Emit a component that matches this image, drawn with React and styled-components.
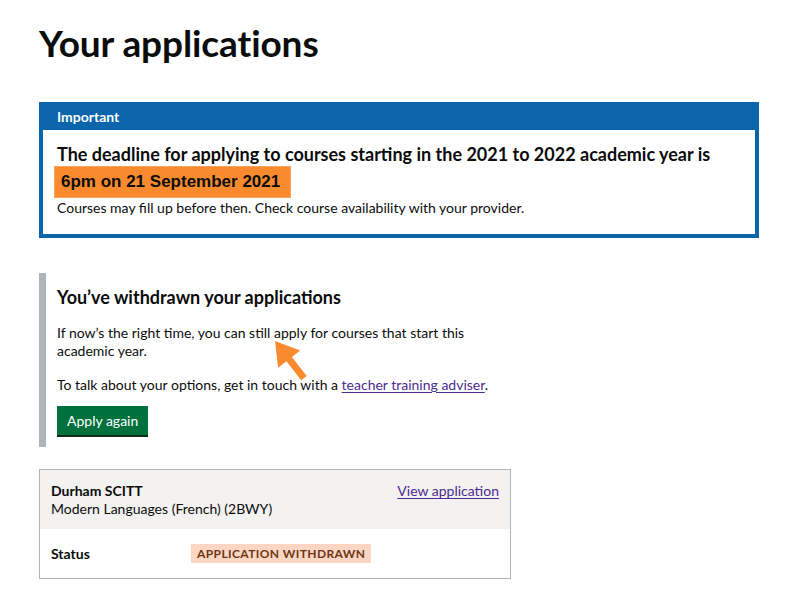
import React from 'react';
import styled, { createGlobalStyle } from 'styled-components';

const GlobalStyle = createGlobalStyle`
  html, body {
    margin: 0;
    padding: 0;
    background: #ffffff;
  }
  body {
    font-family: Lato, "Liberation Sans", sans-serif;
    color: #0b0c0c;
    -webkit-font-smoothing: antialiased;
  }
`;

const Page = styled.main`
  position: relative;
  width: 797px;
  height: 596px;
  box-sizing: border-box;
  padding: 23px 38px 0 39px;
  overflow: hidden;
`;

const Title = styled.h1`
  margin: 0 0 39px;
  font-size: 37px;
  line-height: 40px;
  font-weight: 700;
  letter-spacing: -0.1px;
`;

const Banner = styled.section`
  width: 720px;
  box-sizing: border-box;
  border: 4px solid #0b65aa;
  border-top: 0;
  background: #ffffff;
`;

const BannerHeader = styled.div`
  height: 28px;
  box-sizing: border-box;
  margin: 0 -4px;
  padding: 5px 0 0 18px;
  background: #0b65aa;
  color: #ffffff;
  font-size: 14px;
  line-height: 19px;
  font-weight: 700;
`;

const BannerBody = styled.div`
  padding: 12px 14px 17px;
`;

const BannerHeading = styled.p`
  margin: 0;
  font-size: 18px;
  line-height: 25px;
  font-weight: 700;
  white-space: nowrap;
`;

const Highlight = styled.mark`
  display: block;
  width: fit-content;
  margin: -1px 0 1px -3px;
  padding: 0 11px 0 7px;
  height: 32px;
  line-height: 32px;
  background: #f98b2e;
  box-shadow: inset 0 0 0 1px #fba35a;
  color: #0b0c0c;
  font-family: "Liberation Sans", Arial, sans-serif;
  font-size: 17px;
  font-weight: 700;
`;

const Body = styled.p`
  margin: 0 0 ${p => p.$mb ?? 0}px;
  font-size: 14px;
  line-height: 18px;
`;

const Column = styled.div`
  width: 472px;
`;

const Inset = styled.div`
  margin-top: 35px;
  border-left: 7px solid #b1b4b6;
  padding: 12px 20px 10px 11px;
`;

const InsetHeading = styled.h2`
  margin: 0 0 15px;
  font-size: 18px;
  line-height: 24px;
  font-weight: 700;
`;

const Link = styled.a`
  color: #4c2c92;
  text-decoration: underline;
  text-underline-offset: 2px;
  text-decoration-thickness: 1px;
`;

const Button = styled.button`
  display: block;
  margin: 0 0 2px;
  padding: 5px 10px;
  height: 29px;
  border: 0;
  border-radius: 0;
  background: #00703c;
  box-shadow: 0 2px 0 #002d18;
  color: #ffffff;
  font-family: inherit;
  font-size: 14px;
  line-height: 19px;
  cursor: pointer;
`;

const Card = styled.section`
  margin-top: 22px;
  border: 1px solid #b1b4b6;
`;

const CardHeader = styled.div`
  display: flex;
  justify-content: space-between;
  align-items: flex-start;
  padding: 12px 11px 11px;
  background: #f3f2f1;
`;

const Provider = styled.div`
  font-size: 14px;
  line-height: 18px;
`;

const ProviderName = styled.div`
  font-weight: 700;
`;

const Row = styled.div`
  display: grid;
  grid-template-columns: 140px 1fr;
  align-items: center;
  padding: 15px 11px 15px;
`;

const RowKey = styled.div`
  font-size: 14px;
  line-height: 19px;
  font-weight: 700;
`;

const Tag = styled.strong`
  justify-self: start;
  display: inline-block;
  padding: 2px 6px;
  background: #fcd6c3;
  color: #6e3619;
  font-size: 12px;
  line-height: 15px;
  font-weight: 700;
  letter-spacing: 0.4px;
  text-transform: uppercase;
`;

const Pointer = styled.svg`
  position: absolute;
  left: 0;
  top: 0;
  pointer-events: none;
`;

export default function App() {
  return (
    <>
      <GlobalStyle />
      <Page>
        <Title>Your applications</Title>

        <Banner>
          <BannerHeader>Important</BannerHeader>
          <BannerBody>
            <BannerHeading>
              The deadline for applying to courses starting in the 2021 to 2022 academic year is
            </BannerHeading>
            <Highlight>6pm on 21 September 2021</Highlight>
            <Body>Courses may fill up before then. Check course availability with your provider.</Body>
          </BannerBody>
        </Banner>

        <Column>
          <Inset>
            <InsetHeading>You’ve withdrawn your applications</InsetHeading>
            <Body $mb={16}>
              If now’s the right time, you can still apply for courses that start this academic year.
            </Body>
            <Body $mb={12}>
              To talk about your options, get in touch with a{' '}
              <Link href="#">teacher training adviser</Link>.
            </Body>
            <Button type="button">Apply again</Button>
          </Inset>

          <Card>
            <CardHeader>
              <Provider>
                <ProviderName>Durham SCITT</ProviderName>
                <div>Modern Languages (French) (2BWY)</div>
              </Provider>
              <Provider>
                <Link href="#">View application</Link>
              </Provider>
            </CardHeader>
            <Row>
              <RowKey>Status</RowKey>
              <Tag>Application withdrawn</Tag>
            </Row>
          </Card>
        </Column>

        <Pointer width="797" height="596" viewBox="0 0 797 596">
          <g transform="translate(275 341) rotate(-38)" fill="#f98b2e">
            <polygon points="0,0 -14,23 -3.5,23 -3.5,47 3.5,47 3.5,23 14,23" />
          </g>
        </Pointer>
      </Page>
    </>
  );
}
